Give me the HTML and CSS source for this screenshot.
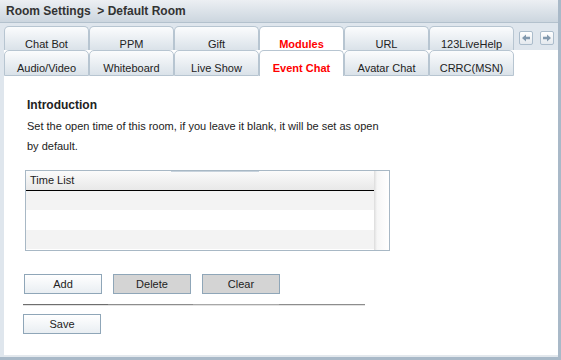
FILE: index.html
```html
<!DOCTYPE html>
<html>
<head>
<meta charset="utf-8">
<link rel="stylesheet" href="styles.css">
</head>
<body>
<div class="window">
  <div class="titlebar">Room Settings &nbsp;&gt; Default Room</div>
  <div class="tabrow1">
    <div class="tab">Chat Bot</div>
    <div class="tab">PPM</div>
    <div class="tab">Gift</div>
    <div class="tab active">Modules</div>
    <div class="tab">URL</div>
    <div class="tab">123LiveHelp</div>
    <div class="nav">
      <span class="navbtn"><svg width="10" height="10" viewBox="0 0 10 10"><path d="M1 5 L5 1.5 L5 3.8 L9 3.8 L9 6.2 L5 6.2 L5 8.5 Z" fill="#8299ae"/></svg></span>
      <span class="navbtn"><svg width="10" height="10" viewBox="0 0 10 10"><path d="M9 5 L5 1.5 L5 3.8 L1 3.8 L1 6.2 L5 6.2 L5 8.5 Z" fill="#8299ae"/></svg></span>
    </div>
  </div>
  <div class="body">
    <div class="tabrow2">
      <div class="tab">Audio/Video</div>
      <div class="tab">Whiteboard</div>
      <div class="tab">Live Show</div>
      <div class="tab active">Event Chat</div>
      <div class="tab">Avatar Chat</div>
      <div class="tab">CRRC(MSN)</div>
    </div>
    <div class="content">
      <h3 class="intro-title">Introduction</h3>
      <p class="intro-text">Set the open time of this room, if you leave it blank, it will be set as open by default.</p>
      <div class="grid">
        <div class="grid-main">
          <div class="grid-head">Time List</div>
          <div class="grid-row alt"></div>
          <div class="grid-row"></div>
          <div class="grid-row alt"></div>
        </div>
        <div class="grid-scroll"></div>
      </div>
      <div class="actions">
        <button class="btn">Add</button>
        <button class="btn gray">Delete</button>
        <button class="btn gray">Clear</button>
      </div>
      <div class="separator"></div>
      <button class="btn save">Save</button>
    </div>
  </div>
  <div class="bottom-strip"></div>
</div>
</body>
</html>
```

FILE: styles.css
```css
html, body {
  margin: 0;
  padding: 0;
  background: #ffffff;
}
body {
  font-family: "Liberation Sans", Arial, sans-serif;
  font-size: 11px;
  color: #222;
}
.window {
  width: 561px;
  height: 360px;
  box-sizing: border-box;
  background: #dfe6ed;
  border-right: 3px solid #a9b9c8;
  border-bottom: 3px solid #a9b9c8;
  display: flex;
  flex-direction: column;
}
.titlebar {
  height: 22px;
  line-height: 23px;
  padding-left: 6px;
  font-size: 12px;
  font-weight: bold;
  color: #333;
  background: linear-gradient(#eceff3, #ccd6df);
  border-bottom: 1px solid #b3c1cd;
}
.tabrow1 {
  display: flex;
  padding: 3px 0 0 4px;
  height: 24px;
}
.tab {
  width: 85px;
  box-sizing: border-box;
  height: 24px;
  padding-top: 10px;
  line-height: 14px;
  text-align: center;
  border: 1px solid #b7c5d1;
  border-bottom: none;
  border-radius: 5px 5px 0 0;
  background: linear-gradient(#fbfcfd, #dae2e9);
  color: #222;
  white-space: nowrap;
}
.tab.active {
  background: #ffffff;
  color: #ff0000;
  font-weight: bold;
}
.nav {
  display: flex;
  gap: 7px;
  margin: 5px 0 0 5px;
}
.navbtn {
  width: 14px;
  height: 14px;
  box-sizing: border-box;
  border: 1px solid #abbccb;
  border-radius: 2px;
  background: linear-gradient(#ffffff, #e4e9ee);
  display: flex;
  align-items: center;
  justify-content: center;
}
.body {
  flex: 1;
  margin-left: 4px;
  background: #ffffff;
  display: flex;
  flex-direction: column;
}
.tabrow2 {
  display: flex;
  height: 26px;
}
.tabrow2 .tab {
  height: 26px;
  border-bottom: 1px solid #b7c5d1;
  padding-top: 10px;
}
.tabrow2 .tab.active {
  border-bottom: none;
}
.content {
  padding: 19px 0 0 19px;
}
.intro-title {
  margin: 0 0 0 4px;
  font-size: 12px;
  font-weight: bold;
  line-height: 21px;
  color: #222;
}
.intro-text {
  margin: 0 0 0 4px;
  width: 357px;
  line-height: 20px;
  color: #222;
}
.grid {
  margin: 14px 0 0 2px;
  width: 365px;
  height: 81px;
  box-sizing: border-box;
  border: 1px solid #a8b8c5;
  display: flex;
}
.grid-main {
  flex: 1;
  display: flex;
  flex-direction: column;
}
.grid-head {
  height: 20px;
  box-sizing: border-box;
  line-height: 19px;
  padding-left: 4px;
  border-bottom: 1px solid #000;
  background: linear-gradient(#c7d2dc, #c7d2dc) no-repeat 145px 0 / 88px 1px, linear-gradient(#fbfbfb, #e8e8e8);
  color: #222;
}
.grid-row {
  height: 20px;
  background: #ffffff;
}
.grid-row.alt {
  background: #f3f3f3;
  height: 19px;
}
.grid-scroll {
  width: 15px;
  background: linear-gradient(to right, #dcdcdc, #f6f6f6 3px, #ffffff);
}
.actions {
  display: flex;
  gap: 11px;
  margin: 23px 0 0 1px;
}
.btn {
  width: 78px;
  height: 20px;
  box-sizing: border-box;
  border: 1px solid #8fa6b8;
  background: linear-gradient(#ffffff, #e9eef2);
  font-family: "Liberation Sans", Arial, sans-serif;
  font-size: 11px;
  color: #222;
  padding: 0;
  margin: 0;
}
.btn.gray {
  background: #d4d4d4;
}
.separator {
  margin: 10px 0 0 0;
  width: 342px;
  height: 2px;
  background: linear-gradient(to right, #6e6e6e 0 85px, #8d8d8d 85px 170px, #a8a8a8 170px 256px, #8d8d8d 256px);
  border-bottom: 1px solid #e2e2e2;
  box-sizing: border-box;
}
.save {
  margin-top: 8px;
}
.bottom-strip {
  height: 2px;
  margin-left: 4px;
  background: #e3e8ed;
}
```
